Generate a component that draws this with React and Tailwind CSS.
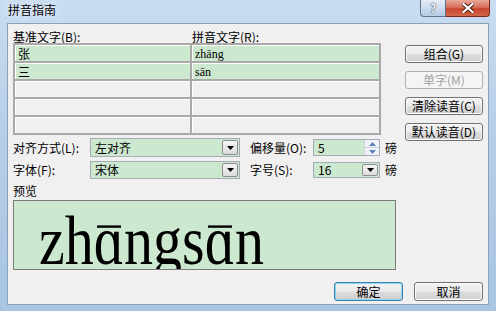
import clsx from 'clsx'

const rows = [
  ['张', 'zhāng'],
  ['三', 'sān'],
  ['', ''],
  ['', ''],
  ['', ''],
]

function Button({ children, disabled, primary, className }) {
  return (
    <div
      className={clsx(
        'flex items-center justify-center rounded-[3px] border text-[12px] leading-none',
        disabled
          ? 'border-[#adb2b5] bg-[#f4f4f4] text-[#a3a3a3]'
          : 'bg-[linear-gradient(180deg,#f2f2f2_0%,#ebebeb_48%,#dddddd_52%,#cfcfcf_100%)] text-black',
        !disabled && (primary ? 'border-[#3c7fb1] shadow-[inset_0_0_0_1px_#8fd3f6]' : 'border-[#707070] shadow-[inset_0_0_0_1px_#fbfbfb]'),
        className
      )}
    >
      {children}
    </div>
  )
}

function DownArrow() {
  return (
    <svg width="7" height="4" viewBox="0 0 7 4">
      <path d="M0 0h7L3.5 4z" fill="#000" />
    </svg>
  )
}

function Combo({ value, className }) {
  return (
    <div className={clsx('flex items-stretch border border-[#a5acb5] bg-[#cce8cf] p-[1px]', className)}>
      <div className="flex flex-1 items-center pl-[3px] text-[12px] leading-none">{value}</div>
      <div className="flex w-[16px] items-center justify-center rounded-[2px] border border-[#8d8d8d] bg-[linear-gradient(180deg,#f4f4f4,#dcdcdc)]">
        <DownArrow />
      </div>
    </div>
  )
}

function Spin({ value, className }) {
  return (
    <div className={clsx('flex items-stretch border border-[#a5acb5] bg-[#cce8cf]', className)}>
      <div className="flex flex-1 items-center pl-[4px] text-[12px] leading-none">{value}</div>
      <div className="flex w-[15px] flex-col border-l border-[#c9d4e0] bg-[#eef3f9]">
        <div className="flex flex-1 items-center justify-center border-b border-[#c9d4e0]">
          <svg width="7" height="4" viewBox="0 0 7 4">
            <path d="M0 4h7L3.5 0z" fill="#5a83b8" />
          </svg>
        </div>
        <div className="flex flex-1 items-center justify-center">
          <svg width="7" height="4" viewBox="0 0 7 4">
            <path d="M0 0h7L3.5 4z" fill="#5a83b8" />
          </svg>
        </div>
      </div>
    </div>
  )
}

// single-storey a with a tone bar drawn over it
function ToneA() {
  return (
    <span className="relative">
      ɑ
      <span className="absolute left-[3px] right-[3px] top-[20px] h-[2px] bg-black" />
    </span>
  )
}

export default function App() {
  return (
    <div className="flex h-[311px] w-[496px] flex-col overflow-hidden bg-[linear-gradient(180deg,#c9ddf1_0%,#b7cfe8_40%,#a9c5e3_100%)] font-['Noto_Sans_CJK_SC',sans-serif] text-black">
      {/* title bar */}
      <div className="flex h-[23px] shrink-0 items-start">
        <div className="pl-[8px] pt-[3px] text-[12px] leading-[14px] text-black [text-shadow:0_0_6px_#ffffff]">拼音指南</div>
        <div className="ml-auto mr-[6px] flex">
          <div className="flex h-[17px] w-[26px] items-center justify-center rounded-bl-[4px] border border-t-0 border-[#5d7490] bg-[linear-gradient(180deg,#e4edf7_0%,#ccdcee_50%,#b5cbe4_100%)] text-[12px] font-bold leading-none text-white [text-shadow:0_0_1px_#1a2a40,0_0_1px_#1a2a40]">
            ?
          </div>
          <div className="flex h-[17px] w-[44px] items-center justify-center rounded-br-[4px] border border-l-0 border-t-0 border-[#7a2a1c] bg-[linear-gradient(180deg,#e9a899_0%,#d7705a_45%,#c8452d_55%,#d2674c_100%)]">
            <svg width="12" height="10" viewBox="0 0 12 10">
              <path d="M1.5 1l9 8M10.5 1l-9 8" stroke="#3a1208" strokeWidth="4" strokeLinecap="square" />
              <path d="M1.5 1l9 8M10.5 1l-9 8" stroke="#ffffff" strokeWidth="2.2" strokeLinecap="square" />
            </svg>
          </div>
        </div>
      </div>

      {/* client area */}
      <div className="ml-[7px] flex h-[282px] w-[482px] flex-col border border-[#8ba1b7] bg-[#f0f0f0] pl-[5px] pr-[5px] pt-[7px]">
        <div className="flex h-[107px] items-start">
          <div className="flex w-[368px] flex-col">
            <div className="flex h-[12px] text-[12px] leading-[12px]">
              <div className="w-[179px]">基准文字(B):</div>
              <div>拼音文字(R):</div>
            </div>
            <div className="grid grid-cols-[175px_187px] gap-[2px] bg-[#a9a9a9] p-[2px]">
              {rows.map(([base, ruby], i) => (
                <div key={i} className="contents">
                  <div
                    className={clsx(
                      'flex h-[16px] items-center border-l border-t border-white pl-[2px] text-[12px] leading-none',
                      base ? 'bg-[#cce8cf]' : 'bg-[#f0f0f0]'
                    )}
                  >
                    {base}
                  </div>
                  <div
                    className={clsx(
                      "flex h-[16px] items-center border-l border-t border-white pl-[2px] font-['Liberation_Serif',serif] text-[12px] leading-none",
                      ruby ? 'bg-[#cce8cf]' : 'bg-[#f0f0f0]'
                    )}
                  >
                    {ruby}
                  </div>
                </div>
              ))}
            </div>
          </div>
          <div className="ml-[24px] mt-[14px] flex flex-col gap-[8px]">
            <Button className="h-[18px] w-[78px]">组合(G)</Button>
            <Button className="h-[18px] w-[78px]" disabled>
              单字(M)
            </Button>
            <Button className="h-[18px] w-[78px]">清除读音(C)</Button>
            <Button className="h-[18px] w-[78px]">默认读音(D)</Button>
          </div>
        </div>

        <div className="flex h-[19px] items-center text-[12px] leading-none">
          <div className="w-[77px]">对齐方式(L):</div>
          <Combo value="左对齐" className="h-[19px] w-[150px]" />
          <div className="ml-[10px] w-[63px]">偏移量(O):</div>
          <Spin value="5" className="h-[17px] w-[67px]" />
          <div className="ml-[5px]">磅</div>
        </div>
        <div className="mt-[4px] flex h-[18px] items-center text-[12px] leading-none">
          <div className="w-[77px]">字体(F):</div>
          <Combo value="宋体" className="h-[18px] w-[150px]" />
          <div className="ml-[10px] w-[63px]">字号(S):</div>
          <Combo value="16" className="h-[16px] w-[67px]" />
          <div className="ml-[5px]">磅</div>
        </div>

        <div className="mt-[6px] h-[12px] text-[12px] leading-[12px]">预览</div>
        <div className="mt-[3px] flex h-[70px] w-[383px] items-end overflow-hidden border border-[#7a7a7a] bg-[#cce8cf] pb-[4px] pl-[25px]">
          <div className="origin-bottom scale-y-[1.2] font-['Liberation_Serif',serif] text-[58px] leading-[40px] text-black">
            zh<ToneA />ngs<ToneA />n
          </div>
        </div>

        <div className="mt-[12px] flex justify-end gap-[11px]">
          <Button primary className="h-[19px] w-[69px]">
            确定
          </Button>
          <Button className="h-[19px] w-[69px]">取消</Button>
        </div>
      </div>
    </div>
  )
}
